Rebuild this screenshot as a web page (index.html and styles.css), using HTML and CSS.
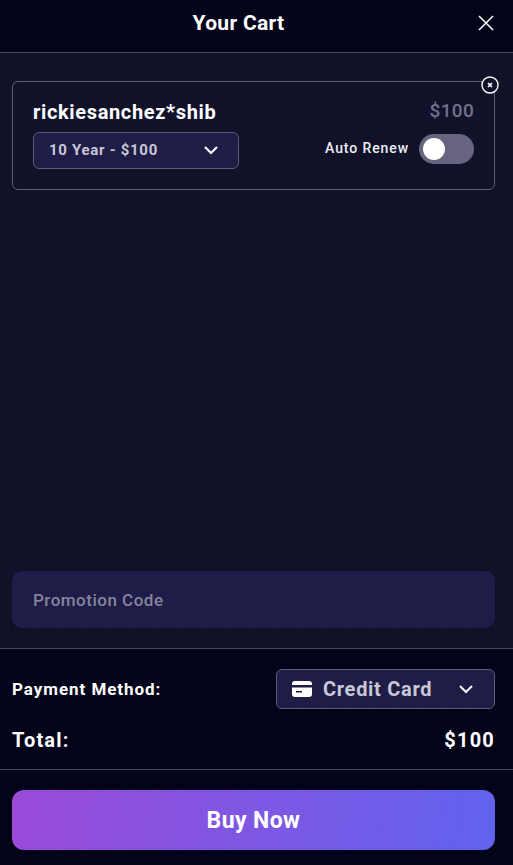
FILE: index.html
```html
<!DOCTYPE html>
<html>
    <head>
        <title>Your Cart</title>
        <meta charset="UTF-8">
        <link rel="stylesheet" href="styles.css">
    </head>
    <body>
        <header class="top">
            <h1>Your Cart</h1>
            <button class="close" aria-label="Close">
                <svg width="16" height="16" viewBox="0 0 16 16"><path d="M1 1L15 15M15 1L1 15" stroke="#fff" stroke-width="1.5" fill="none"/></svg>
            </button>
        </header>
        <main class="content">
            <section class="item">
                <span class="remove">
                    <svg width="18" height="18" viewBox="0 0 18 18"><circle cx="9" cy="9" r="8" fill="#11112a" stroke="#fff" stroke-width="1.4"/><path d="M7 7L11 11M11 7L7 11" stroke="#fff" stroke-width="1.7" fill="none"/></svg>
                </span>
                <div class="item-left">
                    <div class="domain">rickiesanchez*shib</div>
                    <div class="term">
                        <span>10 Year - $100</span>
                        <svg width="16" height="10" viewBox="0 0 16 10"><path d="M2 2L8 8L14 2" stroke="#fff" stroke-width="2.2" fill="none"/></svg>
                    </div>
                </div>
                <div class="item-right">
                    <div class="price">$100</div>
                    <div class="renew">
                        <span>Auto Renew</span>
                        <span class="toggle"><span class="knob"></span></span>
                    </div>
                </div>
            </section>
            <div class="promo">Promotion Code</div>
        </main>
        <section class="summary">
            <div class="row">
                <span class="label">Payment Method:</span>
                <div class="pay">
                    <svg width="20" height="16" viewBox="0 0 20 16"><path d="M3 0H17A3 3 0 0 1 20 3V4H0V3A3 3 0 0 1 3 0ZM0 6.500H20V13A3 3 0 0 1 17 16H3A3 3 0 0 1 0 13ZM4 10V11.500H10V10Z" fill="#fff" fill-rule="evenodd"/></svg>
                    <span class="pay-name">Credit Card</span>
                    <svg width="16" height="10" viewBox="0 0 16 10"><path d="M2 2L8 8L14 2" stroke="#fff" stroke-width="2" fill="none"/></svg>
                </div>
            </div>
            <div class="row total">
                <span>Total:</span>
                <span>$100</span>
            </div>
        </section>
        <footer class="bottom">
            <button class="buy">Buy Now</button>
        </footer>
    </body>
</html>
```
FILE: styles.css
```css
* {
    box-sizing: border-box;
}
body {
    margin: 0;
    height: 865px;
    display: flex;
    flex-direction: column;
    overflow: hidden;
    background-color: #03031a;
    background-image: radial-gradient(rgba(255, 255, 255, 0.03) 0.5px, transparent 0.8px);
    background-size: 6px 6px;
    color: #fff;
    font-family: Roboto, "Liberation Sans", sans-serif;
}
.top {
    height: 53px;
    flex: none;
    position: relative;
    display: flex;
    align-items: center;
    justify-content: center;
    padding: 0 36px 6px 0;
    border-bottom: 1px solid #45455f;
}
h1 {
    margin: 0;
    font-size: 21px;
    font-weight: 700;
    letter-spacing: 0.3px;
}
.close {
    position: absolute;
    top: 15px;
    right: 19px;
    padding: 0;
    border: 0;
    background: none;
    display: flex;
}
.content {
    flex: 1;
    display: flex;
    flex-direction: column;
    justify-content: space-between;
    padding: 28px 18px 20px 12px;
    background-color: #11112a;
    background-image: radial-gradient(rgba(255, 255, 255, 0.025) 0.5px, transparent 0.8px);
    background-size: 6px 6px;
    border-bottom: 1px solid #45455f;
}
.item {
    position: relative;
    height: 109px;
    width: 483px;
    display: flex;
    justify-content: space-between;
    padding: 18px 20px 0 20px;
    border: 1px solid #5c5c78;
    border-radius: 6px;
}
.remove {
    position: absolute;
    top: -6px;
    right: -5px;
    display: flex;
}
.domain {
    font-size: 20px;
    font-weight: 700;
    line-height: 24px;
    letter-spacing: 0.65px;
}
.term {
    width: 206px;
    height: 37px;
    margin-top: 8px;
    padding: 0 19px 1px 15px;
    display: flex;
    align-items: center;
    justify-content: space-between;
    background-color: #1f1d47;
    border: 1px solid #5c5c78;
    border-radius: 6px;
    color: #c9c8d6;
    font-size: 15px;
    font-weight: 700;
    letter-spacing: 0.7px;
}
.item-right {
    display: flex;
    flex-direction: column;
    align-items: flex-end;
}
.price {
    font-size: 19px;
    font-weight: 500;
    line-height: 22px;
    letter-spacing: 0.3px;
    color: #73728a;
}
.renew {
    margin-top: 12px;
    display: flex;
    align-items: center;
    gap: 10px;
    font-size: 14px;
    font-weight: 500;
    letter-spacing: 0.9px;
    color: #eeeef4;
}
.renew span:first-child {
    margin-bottom: 2px;
}
.toggle {
    width: 55px;
    height: 30px;
    padding: 4px;
    display: flex;
    background-color: #66647f;
    border-radius: 15px;
}
.knob {
    width: 22px;
    height: 22px;
    background-color: #fff;
    border-radius: 50%;
}
.promo {
    width: 483px;
    height: 57px;
    padding-left: 21px;
    display: flex;
    align-items: center;
    background-color: #1f1d47;
    border-radius: 10px;
    color: #85849b;
    font-size: 17px;
    font-weight: 500;
    letter-spacing: 0.5px;
}
.summary {
    height: 121px;
    flex: none;
    padding: 20px 18px 0 12px;
    border-bottom: 1px solid #45455f;
}
.row {
    display: flex;
    align-items: center;
    justify-content: space-between;
}
.label {
    font-size: 17px;
    font-weight: 700;
    letter-spacing: 0.95px;
}
.pay {
    width: 219px;
    height: 40px;
    padding: 0 20px 0 15px;
    display: flex;
    align-items: center;
    background-color: #1f1d47;
    border: 1px solid #5c5c78;
    border-radius: 6px;
}
.pay-name {
    flex: 1;
    margin-left: 11px;
    color: #c9c8d6;
    font-size: 20px;
    font-weight: 700;
    letter-spacing: 0.7px;
}
.total {
    margin-top: 19px;
    font-size: 20px;
    font-weight: 700;
    letter-spacing: 1.2px;
}
.bottom {
    height: 95px;
    flex: none;
    padding: 20px 18px 0 12px;
}
.buy {
    width: 483px;
    height: 60px;
    border: 0;
    border-radius: 12px;
    background: linear-gradient(100deg, #9a4bd8, #6163ef);
    color: #fff;
    font-family: inherit;
    font-size: 23px;
    font-weight: 700;
    letter-spacing: 0.4px;
}
```
